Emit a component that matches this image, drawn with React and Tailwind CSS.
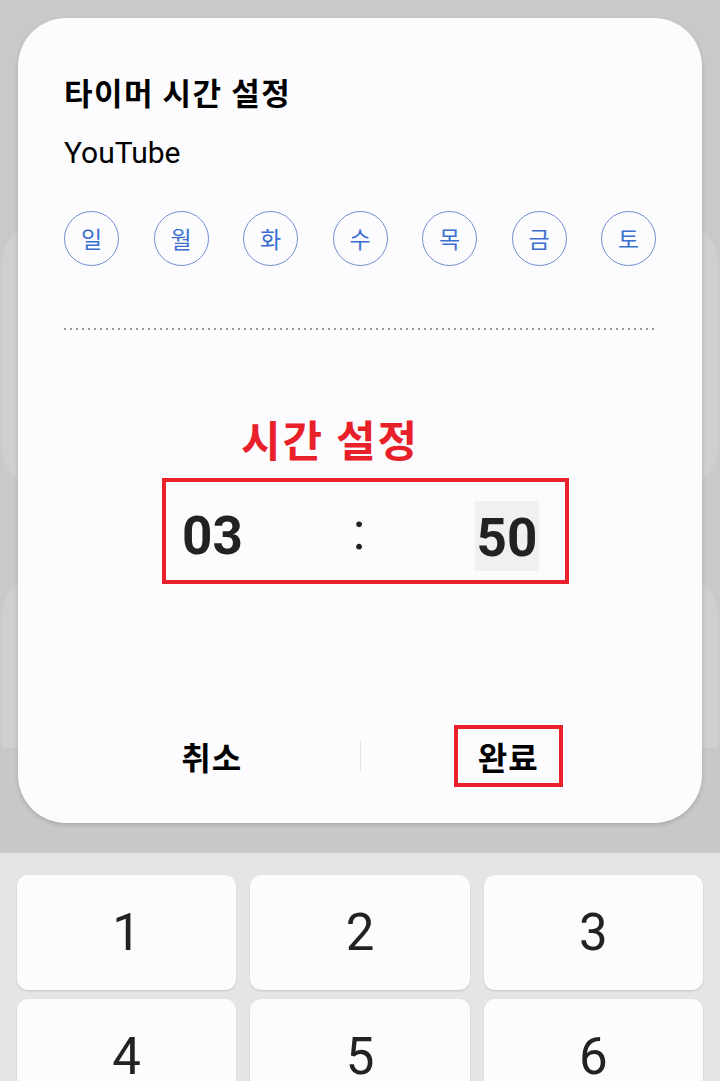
import React from "react";

const KR = { fontFamily: '"Noto Sans CJK KR", "Noto Sans", sans-serif' };
const RB = { fontFamily: 'Roboto, "Noto Sans CJK KR", sans-serif' };

const days = ["일", "월", "화", "수", "목", "금", "토"];
const keys = ["1", "2", "3", "4", "5", "6"];

export default function App() {
  return (
    <div className="relative w-[720px] h-[1081px] overflow-hidden bg-[#e5e5e7]">
      {/* dimmed page behind the dialog */}
      <div className="h-[748px] bg-[#c9c9c9] flex flex-col px-[2px]">
        <div className="mt-[222px] h-[266px] rounded-[40px] bg-[#cfcfcf]" />
        <div className="mt-[87px] flex-1 rounded-t-[40px] bg-[#cfcfcf]" />
      </div>
      <div className="h-[105px] bg-[#c8c8c8]" />
      {/* keypad */}
      <div className="grid grid-cols-3 gap-x-[14px] gap-y-[9px] px-[17px] pt-[22px]">
        {keys.map((k) => (
          <div
            key={k}
            className="h-[115px] rounded-[11px] bg-[#fcfcfd] shadow-[0_1px_2px_rgba(0,0,0,0.14)] flex items-center justify-center text-[51px] text-[#222222] leading-none"
            style={RB}
          >
            {k}
          </div>
        ))}
      </div>

      {/* dialog */}
      <div className="absolute top-[18px] left-[18px] w-[684px] h-[805px] rounded-[48px] bg-[#fcfcfe] shadow-[0_2px_4px_rgba(0,0,0,0.16)] flex flex-col px-[46px]">
        <div className="mt-[56px] text-[31px] leading-[36px] font-bold tracking-[1.5px] text-black" style={KR}>
          타이머 시간 설정
        </div>
        <div className="mt-[25px] text-[30px] leading-[36px] text-black" style={RB}>
          YouTube
        </div>
        <div className="mt-[40px] flex justify-between">
          {days.map((d) => (
            <div
              key={d}
              className="w-[55px] h-[55px] rounded-full border border-[#6f8fd0] flex items-center justify-center text-[23px] text-[#3a6fd0] leading-none"
              style={KR}
            >
              {d}
            </div>
          ))}
        </div>
        <div className="mt-[62px] h-[2px] w-[590px] bg-[repeating-linear-gradient(90deg,#9a9a9a_0_2px,transparent_2px_6px)]" />

        <div
          className="mt-[83px] ml-[177px] text-[43px] leading-[50px] font-bold tracking-[2px] text-[#e8202a]"
          style={KR}
        >
          시간 설정
        </div>

        <div className="mt-[15px] ml-[98px] w-[407px] h-[106px] border-4 border-[#e8212b] flex items-center pl-[16px]">
          <span className="w-[60px] text-[53px] font-bold leading-none text-[#222222] translate-y-[5px]" style={RB}>
            03
          </span>
          <span className="ml-[110px] w-[14px] text-center text-[52px] leading-none text-[#222222] translate-y-[1px]" style={RB}>
            :
          </span>
          <span
            className="ml-[109px] w-[64px] h-[70px] mt-[10px] bg-[#f0f0f1] flex items-center justify-center text-[53px] font-bold leading-none text-[#222222]"
            style={RB}
          >
            <span className="translate-y-[2px]">50</span>
          </span>
        </div>

        <div className="mt-[141px] flex items-center">
          <div className="flex-1 flex justify-center">
            <span className="text-[32px] font-bold tracking-[1px] leading-[54px] text-black" style={KR}>
              취소
            </span>
          </div>
          <div className="w-px h-[30px] bg-[#e2e2e4]" />
          <div className="flex-1 flex justify-center">
            <span
              className="border-4 border-[#e8212b] px-[20px] text-[32px] font-bold tracking-[1px] leading-[54px] text-black"
              style={KR}
            >
              완료
            </span>
          </div>
        </div>
      </div>
    </div>
  );
}
